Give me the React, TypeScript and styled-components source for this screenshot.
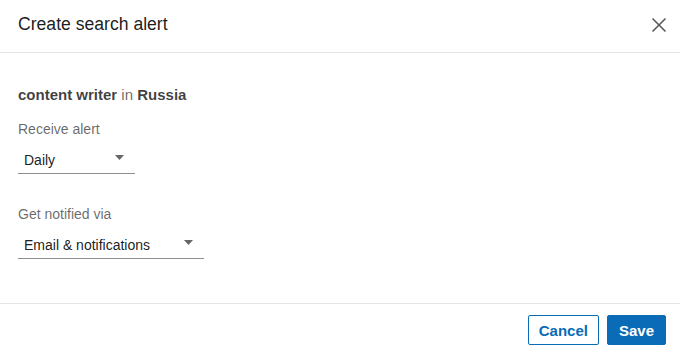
import React from "react";
import styled, { createGlobalStyle } from "styled-components";

const Global = createGlobalStyle`
  html, body { margin: 0; padding: 0; background: #fff; }
  body { font-family: "Liberation Sans", Arial, sans-serif; }
  * { box-sizing: border-box; }
`;

const Dialog = styled.div`
  width: 680px;
  height: 354px;
  display: flex;
  flex-direction: column;
  background: #fff;
`;

const Header = styled.header`
  height: 53px;
  display: flex;
  justify-content: space-between;
  align-items: flex-start;
  padding: 12px 13px 0 18px;
  border-bottom: 1px solid #e4e4e4;
`;

const Title = styled.h2`
  margin: 0;
  font-size: 17.6px;
  line-height: 24px;
  font-weight: 400;
  color: rgba(0, 0, 0, 0.9);
`;

const CloseButton = styled.button`
  margin-top: 5px;
  padding: 0;
  border: 0;
  background: none;
  width: 16px;
  height: 16px;
  display: flex;
  cursor: pointer;
`;

const Body = styled.main`
  flex: 1;
  padding: 32px 18px 0;
  display: flex;
  flex-direction: column;
  align-items: flex-start;
`;

const Query = styled.h3`
  margin: 0 0 14px;
  font-size: 15px;
  line-height: 20px;
  font-weight: 700;
  color: rgba(0, 0, 0, 0.75);
`;

const Muted = styled.span`
  font-weight: 400;
  color: rgba(0, 0, 0, 0.6);
`;

const Field = styled.div<{ $gap?: number }>`
  display: flex;
  flex-direction: column;
  margin-top: ${(p) => p.$gap ?? 0}px;
`;

const Label = styled.label`
  font-size: 14px;
  line-height: 20px;
  color: rgba(0, 0, 0, 0.6);
`;

const Select = styled.div<{ $width: number }>`
  width: ${(p) => p.$width}px;
  display: flex;
  align-items: center;
  justify-content: space-between;
  padding: 11px 11px 3px 6px;
  border-bottom: 1px solid #8f8f8f;
  font-size: 14px;
  line-height: 20px;
  color: rgba(0, 0, 0, 0.9);
`;

const Caret = styled.svg`
  width: 9px;
  height: 5px;
  margin-top: -6px;
`;

const Footer = styled.footer`
  display: flex;
  justify-content: flex-end;
  gap: 8px;
  padding: 11px 14px 9px;
  border-top: 1px solid #e4e4e4;
`;

const Button = styled.button<{ $primary?: boolean }>`
  height: 30px;
  padding: 0 ${(p) => (p.$primary ? 11 : 10)}px;
  border-radius: 2px;
  border: 1px solid #0a6bb6;
  background: ${(p) => (p.$primary ? "#0a6bb6" : "#fff")};
  color: ${(p) => (p.$primary ? "#fff" : "#0a6bb6")};
  font-family: "Liberation Sans", Arial, sans-serif;
  font-size: 15px;
  font-weight: 700;
  cursor: pointer;
`;

const CaretIcon = () => (
  <Caret viewBox="0 0 9 5">
    <path d="M0 0h9L4.5 5z" fill="#666" />
  </Caret>
);

export default function App() {
  return (
    <>
      <Global />
      <Dialog>
        <Header>
          <Title>Create search alert</Title>
          <CloseButton aria-label="Dismiss">
            <svg width="16" height="16" viewBox="0 0 16 16">
              <path d="M1.5 1.5l13 13M14.5 1.5l-13 13" stroke="#555" strokeWidth="1.5" />
            </svg>
          </CloseButton>
        </Header>
        <Body>
          <Query>
            content writer <Muted>in</Muted> Russia
          </Query>
          <Field>
            <Label>Receive alert</Label>
            <Select $width={117}>
              <span>Daily</span>
              <CaretIcon />
            </Select>
          </Field>
          <Field $gap={30}>
            <Label>Get notified via</Label>
            <Select $width={186}>
              <span>Email &amp; notifications</span>
              <CaretIcon />
            </Select>
          </Field>
        </Body>
        <Footer>
          <Button>Cancel</Button>
          <Button $primary>Save</Button>
        </Footer>
      </Dialog>
    </>
  );
}
